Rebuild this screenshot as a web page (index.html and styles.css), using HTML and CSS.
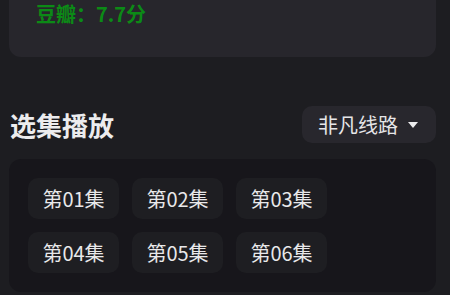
FILE: index.html
```html
<!DOCTYPE html>
<html lang="zh-CN">
<head>
<meta charset="utf-8">
<link rel="stylesheet" href="styles.css">
</head>
<body>
<div class="page">
  <div class="info-card">
    <div class="rating">豆瓣：7.7分</div>
  </div>
  <div class="section-head">
    <h2 class="title">选集播放</h2>
    <button class="source">非凡线路<span class="caret"></span></button>
  </div>
  <div class="episodes">
    <div class="ep">第01集</div>
    <div class="ep">第02集</div>
    <div class="ep">第03集</div>
    <div class="ep">第04集</div>
    <div class="ep">第05集</div>
    <div class="ep">第06集</div>
  </div>
</div>
</body>
</html>
```
FILE: styles.css
```css
html, body {
  margin: 0;
  padding: 0;
  background: #1d1d21;
}
body {
  width: 450px;
  height: 295px;
  overflow: hidden;
  font-family: "Noto Sans CJK SC", "Noto Sans", sans-serif;
  color: #e6e6e8;
}
.page {
  padding: 0 14px 0 9px;
}
.info-card {
  background: #27262c;
  border-radius: 0 0 12px 12px;
  height: 58px;
  box-sizing: border-box;
  padding: 0 0 0 27px;
}
.rating {
  color: #0c8a16;
  font-size: 20px;
  font-weight: 700;
  line-height: 30px;
  margin-top: -1px;
}
.section-head {
  display: flex;
  align-items: center;
  justify-content: space-between;
  margin-top: 49px;
  height: 37px;
}
.title {
  margin: 0 0 0 1px;
  font-size: 26px;
  font-weight: 700;
  line-height: 37px;
  color: #ececee;
}
.source {
  display: flex;
  align-items: center;
  height: 37px;
  box-sizing: border-box;
  padding: 0 18px 0 16px;
  border: none;
  border-radius: 10px;
  background: #28272d;
  color: #e6e6e8;
  font-family: inherit;
  font-size: 20px;
  line-height: 37px;
}
.caret {
  width: 0;
  height: 0;
  margin-left: 10px;
  border-left: 5px solid transparent;
  border-right: 5px solid transparent;
  border-top: 6px solid #ececee;
}
.episodes {
  margin-top: 16px;
  background: #17161b;
  border-radius: 12px;
  padding: 19px 19px 20px;
  display: grid;
  grid-template-columns: repeat(3, 91px);
  column-gap: 13px;
  row-gap: 13px;
  height: 133px;
  box-sizing: border-box;
}
.ep {
  height: 41px;
  border-radius: 10px;
  background: #1e1e22;
  display: flex;
  align-items: center;
  justify-content: center;
  font-size: 20px;
  color: #e8e8ea;
}
```
